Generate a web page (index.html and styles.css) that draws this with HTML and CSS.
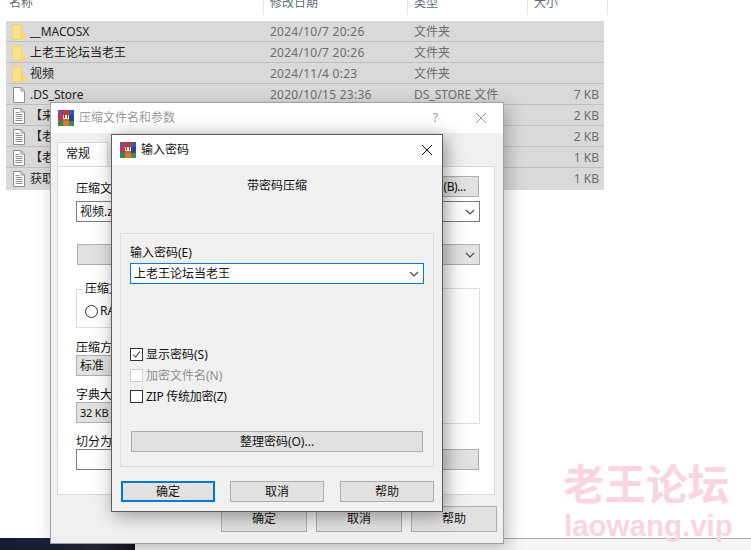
FILE: index.html
```html
<!DOCTYPE html>
<html lang="zh-CN">
<head>
<meta charset="UTF-8">
<title>输入密码</title>
<link rel="stylesheet" href="styles.css">
</head>
<body>

<svg class="sprite" width="0" height="0">
  <symbol id="folder" viewBox="0 0 14 16">
    <path d="M.5.500h9v15H.5z" fill="#fde08a" stroke="#f3cf72" stroke-width="1"/>
    <path d="M10 9h3.500v6.500H10z" fill="#f8d678"/>
  </symbol>
  <symbol id="blank" viewBox="0 0 14 16">
    <path d="M1.500.5h7.500l3.500 3.500v11.500h-11z" fill="#fff" stroke="#8e8e8e"/>
    <path d="M9 .5v3.500h3.500" fill="none" stroke="#8e8e8e"/>
  </symbol>
  <symbol id="text" viewBox="0 0 14 16">
    <path d="M1.500.5h7.500l3.500 3.500v11.500h-11z" fill="#fff" stroke="#8e8e8e"/>
    <path d="M9 .5v3.500h3.500M3.500 4.500h4M3.500 6.500h7M3.500 8.500h7M3.500 10.500h7M3.500 12.500h7" fill="none" stroke="#8e8e8e"/>
  </symbol>
  <symbol id="rar" viewBox="0 0 16 16">
    <path d="M0 0h5v5H0z" fill="#8c3f9c"/>
    <path d="M5 0h6v5H5z" fill="#c8343c"/>
    <path d="M11 0h5v5h-5z" fill="#3458b8"/>
    <path d="M0 5h5v6H0z" fill="#b83a58"/>
    <path d="M5 5h6v6H5z" fill="#f0e4d0"/>
    <path d="M11 5h5v6h-5z" fill="#2c3f98"/>
    <path d="M0 11h5v5H0z" fill="#2f8f48"/>
    <path d="M5 11h6v5H5z" fill="#d8782c"/>
    <path d="M11 11h5v5h-5z" fill="#3f8c50"/>
    <path d="M6 3h1v5H6zM9 3h1v5H9z" fill="#7a4a20"/>
    <path d="M5 9h6v2H5z" fill="#a87838"/>
  </symbol>
  <symbol id="chevron" viewBox="0 0 10 6">
    <path d="M1 1l4 4 4-4" fill="none" stroke="#444" stroke-width="1.100"/>
  </symbol>
  <symbol id="close" viewBox="0 0 12 12">
    <path d="M1 1l10 10M11 1L1 11" fill="none" stroke="currentColor" stroke-width="1"/>
  </symbol>
</svg>

<div class="file-header">
  <div class="head-cell">名称</div>
  <div class="head-cell">修改日期</div>
  <div class="head-cell">类型</div>
  <div class="head-cell">大小</div>
</div>

<div class="file-list">
  <div class="file-row">
    <div class="file-name"><svg class="file-icon"><use href="#folder"/></svg>__MACOSX</div>
    <div class="file-meta file-date">2024/10/7 20:26</div>
    <div class="file-meta">文件夹</div>
    <div class="file-size"></div>
  </div>
  <div class="file-row">
    <div class="file-name"><svg class="file-icon"><use href="#folder"/></svg>上老王论坛当老王</div>
    <div class="file-meta file-date">2024/10/7 20:26</div>
    <div class="file-meta">文件夹</div>
    <div class="file-size"></div>
  </div>
  <div class="file-row">
    <div class="file-name"><svg class="file-icon"><use href="#folder"/></svg>视频</div>
    <div class="file-meta file-date">2024/11/4 0:23</div>
    <div class="file-meta">文件夹</div>
    <div class="file-size"></div>
  </div>
  <div class="file-row">
    <div class="file-name"><svg class="file-icon"><use href="#blank"/></svg>.DS_Store</div>
    <div class="file-meta file-date">2020/10/15 23:36</div>
    <div class="file-meta">DS_STORE 文件</div>
    <div class="file-size">7 KB</div>
  </div>
  <div class="file-row">
    <div class="file-name"><svg class="file-icon"><use href="#text"/></svg>【来</div>
    <div class="file-meta"></div>
    <div class="file-meta"></div>
    <div class="file-size">2 KB</div>
  </div>
  <div class="file-row">
    <div class="file-name"><svg class="file-icon"><use href="#text"/></svg>【老</div>
    <div class="file-meta"></div>
    <div class="file-meta"></div>
    <div class="file-size">2 KB</div>
  </div>
  <div class="file-row">
    <div class="file-name"><svg class="file-icon"><use href="#text"/></svg>【老</div>
    <div class="file-meta"></div>
    <div class="file-meta"></div>
    <div class="file-size">1 KB</div>
  </div>
  <div class="file-row">
    <div class="file-name"><svg class="file-icon"><use href="#text"/></svg>获取</div>
    <div class="file-meta"></div>
    <div class="file-meta"></div>
    <div class="file-size">1 KB</div>
  </div>
</div>

<!-- bottom edge of the desktop -->
<div class="desk-strip">
  <div class="desk-photo"></div>
  <div class="desk-rest"></div>
</div>

<!-- back window -->
<div class="window window-back">
  <div class="title-bar title-inactive">
    <svg class="app-icon"><use href="#rar"/></svg>
    <span class="title-text">压缩文件名和参数</span>
    <span class="title-help">?</span>
    <svg class="title-close"><use href="#close"/></svg>
  </div>
  <div class="back-body">
    <div class="tab">常规</div>
    <div class="tab-panel">
      <div class="name-row">
        <span class="ctl-label">压缩文件名(A)</span>
        <div class="btn btn-browse">浏览(B)...</div>
      </div>
      <div class="field field-name">视频.zip<svg class="chevron"><use href="#chevron"/></svg></div>
      <div class="combo combo-profile"><svg class="chevron"><use href="#chevron"/></svg></div>
      <div class="panel-cols">
        <div class="col-left">
          <fieldset class="format-group">
            <legend>压缩文件格式</legend>
            <div class="radio-row"><span class="radio"></span>RAR</div>
          </fieldset>
          <div class="ctl-label label-method">压缩方式(C)</div>
          <div class="combo">标准</div>
          <div class="ctl-label label-next">字典大小(I)</div>
          <div class="combo combo-size">32 KB</div>
          <div class="ctl-label label-next">切分为分卷(V)</div>
          <div class="field"></div>
        </div>
        <div class="col-right">
          <div class="options-box"></div>
          <div class="btn btn-wide"></div>
        </div>
      </div>
    </div>
    <div class="back-actions">
      <div class="btn btn-back">确定</div>
      <div class="btn btn-back">取消</div>
      <div class="btn btn-back">帮助</div>
    </div>
  </div>
</div>

<!-- front window -->
<div class="window window-front">
  <div class="title-bar">
    <svg class="app-icon"><use href="#rar"/></svg>
    <span class="title-text">输入密码</span>
    <svg class="title-close"><use href="#close"/></svg>
  </div>
  <div class="front-body">
    <div class="front-heading">带密码压缩</div>
    <div class="password-group">
      <div class="ctl-label">输入密码(E)</div>
      <div class="field field-focus">上老王论坛当老王<svg class="chevron"><use href="#chevron"/></svg></div>
      <div class="check-list">
        <div class="check-row">
          <span class="check">
            <svg viewBox="0 0 13 13"><path d="M2.500 6.500l3 3 5-6.500" fill="none" stroke="#333" stroke-width="1.200"/></svg>
          </span>
          显示密码(S)
        </div>
        <div class="check-row check-disabled"><span class="check"></span>加密文件名(N)</div>
        <div class="check-row check-zip"><span class="check"></span>ZIP 传统加密(Z)</div>
      </div>
      <div class="btn btn-organize">整理密码(O)...</div>
    </div>
    <div class="front-actions">
      <div class="btn btn-front btn-default">确定</div>
      <div class="btn btn-front">取消</div>
      <div class="btn btn-front">帮助</div>
    </div>
  </div>
</div>

<div class="watermark">
  <div class="mark-cn">老王论坛</div>
  <div class="mark-en">laowang.vip</div>
</div>

</body>
</html>
```

FILE: styles.css
```css
* {
  box-sizing: border-box;
}

body {
  position: relative;
  width: 751px;
  height: 550px;
  margin: 0;
  overflow: hidden;
  background-color: #fff;
  color: #111;
  font-family: "Noto Sans", "Noto Sans CJK SC", sans-serif;
  font-size: 12px;
  line-height: 16px;
}

.sprite {
  position: absolute;
}

/* Explorer list */
.file-header {
  display: grid;
  grid-template-columns: 264px 144px 120px 80px;
  width: 608px;
  height: 15px;
  overflow: hidden;
}

.head-cell {
  height: 15px;
  padding: 0 0 0 6px;
  border-right: 1px solid #e5e5e5;
  color: #5f6b7a;
  line-height: 6px;
}

.head-cell:first-child {
  padding-left: 9px;
}

.file-list {
  width: 598px;
  margin: 6px 0 0 6px;
}

.file-row {
  display: grid;
  grid-template-columns: 258px 144px 120px 76px;
  align-items: center;
  height: 21px;
  padding-top: 1px;
  border-bottom: 1px solid #bfbfbf;
  background-color: #d9d9d9;
}

.file-row:last-child {
  height: 22px;
  padding-bottom: 1px;
  border-bottom: 0;
}

.file-name {
  display: flex;
  align-items: center;
  gap: 4px;
  padding-left: 6px;
  color: #222;
}

.file-icon {
  width: 14px;
  height: 16px;
  flex-shrink: 0;
}

.file-meta {
  padding-left: 6px;
  color: #6d6d6d;
}

.file-date {
  letter-spacing: 0.25px;
}

.file-size {
  padding-right: 5px;
  color: #6d6d6d;
  text-align: right;
}

/* Desktop edge */
.desk-strip {
  position: absolute;
  left: 0;
  top: 538px;
  display: flex;
  width: 751px;
  height: 12px;
}

.desk-photo {
  width: 135px;
  background: linear-gradient(90deg, #161a33, #1d2138 40%, #2a2c3c 70%, #15151f);
}

.desk-rest {
  flex: 1;
  border-top: 1px solid #a8a8a8;
  background-color: #f5f5f5;
}

/* Windows */
.window {
  position: absolute;
  background-color: #f0f0f0;
}

.window-back {
  left: 50px;
  top: 102px;
  width: 454px;
  height: 442px;
  border: 1px solid #a0a0a0;
  box-shadow: 4px 4px 16px rgba(0, 0, 0, 0.25);
}

.window-front {
  left: 111px;
  top: 134px;
  width: 332px;
  height: 378px;
  border: 1px solid #5c5c5c;
  box-shadow: 3px 3px 18px rgba(0, 0, 0, 0.4);
}

.title-bar {
  display: flex;
  align-items: center;
  height: 30px;
  padding: 0 9px 0 8px;
  background-color: #fff;
}

.app-icon {
  width: 16px;
  height: 16px;
  flex-shrink: 0;
}

.title-text {
  flex: 1;
  margin-left: 5px;
}

.title-close {
  width: 12px;
  height: 12px;
  color: #111;
}

.title-inactive {
  padding: 0 16px 0 7px;
  color: #9a9a9a;
}

.title-inactive .title-close {
  color: #9a9a9a;
}

.title-help {
  margin-right: 37px;
}

/* Shared controls */
.btn {
  display: flex;
  align-items: center;
  justify-content: center;
  height: 21px;
  border: 1px solid #adadad;
  background-color: #e1e1e1;
}

.field,
.combo {
  position: relative;
  display: flex;
  align-items: center;
  height: 21px;
  padding-left: 3px;
}

.field {
  border: 1px solid #7a7a7a;
  background-color: #fff;
}

.combo {
  border: 1px solid #adadad;
  background-color: #e1e1e1;
}

.combo-size {
  font-size: 11px;
  letter-spacing: -0.2px;
}

.chevron {
  width: 10px;
  height: 6px;
  position: absolute;
  right: 4px;
  top: 7px;
}

/* Back window body */
.back-body {
  height: 410px;
  padding: 9px 8px 0 6px;
}

.tab {
  width: 51px;
  height: 24px;
  padding: 3px 0 0 8px;
  border: 1px solid #d9d9d9;
  border-bottom: 0;
  background-color: #fff;
}

.tab-panel {
  height: 329px;
  padding: 9px 14px 0 18px;
  border: 1px solid #d9d9d9;
  background-color: #fff;
}

.name-row {
  display: flex;
  align-items: flex-end;
  justify-content: space-between;
  height: 21px;
  padding-right: 1px;
}

.ctl-label {
  display: block;
}

.btn-browse {
  width: 72px;
  letter-spacing: -0.4px;
}

.field-name {
  margin-top: 4px;
}

.combo-profile {
  margin: 22px 0 0 1px;
}

.panel-cols {
  display: flex;
  justify-content: space-between;
  margin-top: 16px;
}

.col-left {
  width: 190px;
}

.col-right {
  width: 180px;
  padding-top: 7px;
}

.format-group {
  height: 47px;
  margin: 0;
  padding: 0 8px;
  border: 1px solid #dcdcdc;
}

.format-group legend {
  margin-left: -2px;
  padding: 0 2px;
}

.radio-row {
  display: flex;
  align-items: center;
  gap: 2px;
  margin-top: 6px;
}

.radio {
  width: 13px;
  height: 13px;
  border: 1px solid #333;
  border-radius: 50%;
  background-color: #fff;
}

.label-method {
  height: 17px;
  margin-top: 10px;
  padding-top: 2px;
}

.label-next {
  height: 17px;
  margin-top: 9px;
  padding-top: 2px;
}

.options-box {
  height: 136px;
  border: 1px solid #dcdcdc;
}

.btn-wide {
  margin: 25px 1px 0 0;
}

.back-actions {
  display: flex;
  justify-content: flex-end;
  gap: 9px;
  margin: 11px -2px 0 0;
}

.btn-back {
  width: 86px;
  height: 26px;
}

/* Front window body */
.front-body {
  height: 346px;
  padding: 13px 8px 0;
}

.front-heading {
  text-align: center;
}

.password-group {
  height: 234px;
  margin-top: 39px;
  padding: 11px 9px 0;
  border: 1px solid #dcdcdc;
}

.field-focus {
  margin-top: 2px;
  border-color: #0078d7;
}

.check-list {
  margin-top: 60px;
}

.check-row {
  display: flex;
  align-items: center;
  gap: 3px;
  height: 21px;
}

.check {
  width: 13px;
  height: 13px;
  border: 1px solid #333;
  background-color: #fff;
}

.check svg {
  display: block;
  width: 11px;
  height: 11px;
}

.check-disabled {
  color: #8f8f8f;
}

.check-disabled .check {
  border-color: #ccc;
}

.check-zip {
  letter-spacing: -0.25px;
}

.btn-organize {
  margin: 24px 1px 0;
}

.front-actions {
  display: flex;
  gap: 15px;
  margin-top: 14px;
  padding-left: 1px;
}

.btn-front {
  width: 94px;
}

.btn-front:last-child {
  margin-left: 1px;
}

.btn-default {
  border: 2px solid #0078d7;
}

/* Watermark */
.watermark {
  position: absolute;
  left: 564px;
  top: 460px;
  width: 175px;
  color: #fad5dd;
  font-weight: 700;
}

.mark-cn {
  margin-left: -1px;
  font-size: 41.500px;
  line-height: 48px;
}

.mark-en {
  margin-top: 2px;
  font-family: "Liberation Sans", sans-serif;
  font-size: 29.500px;
  line-height: 32px;
}
```
